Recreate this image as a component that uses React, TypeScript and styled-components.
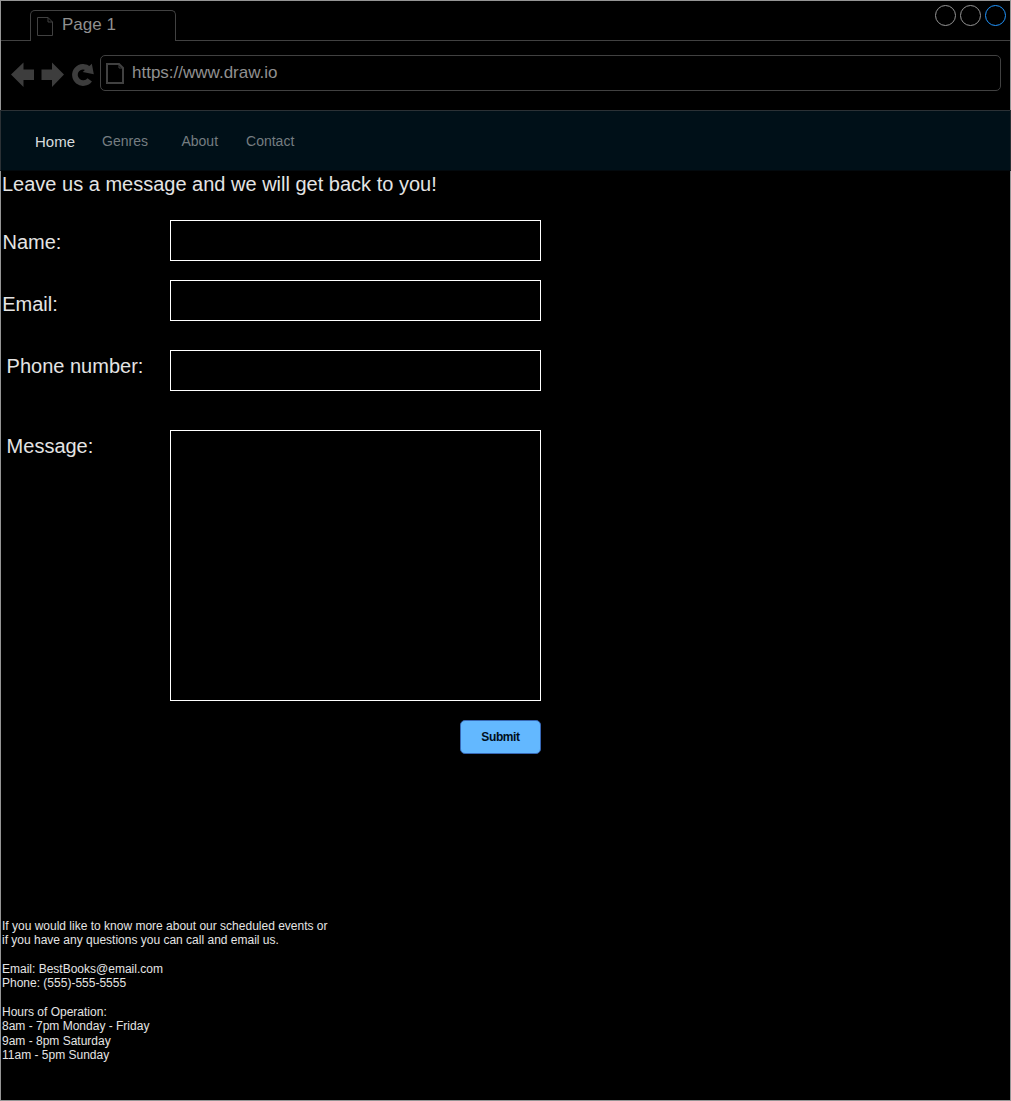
import React from 'react';
import styled, { createGlobalStyle } from 'styled-components';

const GlobalStyle = createGlobalStyle`
  * { box-sizing: border-box; }
  body { margin: 0; background: #000; font-family: "Liberation Sans", Arial, Helvetica, sans-serif; }
`;

const Frame = styled.div`
  width: 1011px;
  height: 1101px;
  border: 1px solid #959595;
  background: #000;
  display: flex;
  flex-direction: column;
`;

const TitleBar = styled.header`
  display: flex;
  height: 40px;
  flex: none;
`;

const TabGap = styled.div`
  width: 29px;
  border-bottom: 1px solid #414141;
`;

const Tab = styled.div`
  width: 146px;
  height: 31px;
  margin-top: 9px;
  border: 1px solid #414141;
  border-bottom: 0;
  border-radius: 5px 5px 0 0;
  display: flex;
  padding: 5px 0 0 6px;
  gap: 9px;

  svg {
    margin-top: 1px;
  }
`;

const TabTitle = styled.span`
  font-size: 17px;
  line-height: 19px;
  margin-top: -1px;
  color: #909090;
`;

const WindowControls = styled.div`
  flex: 1;
  display: flex;
  justify-content: flex-end;
  gap: 4px;
  padding: 4px 4px 0 0;
  border-bottom: 1px solid #414141;
`;

const Circle = styled.i<{ $color: string }>`
  width: 21px;
  height: 21px;
  border: 1px solid ${(p) => p.$color};
  border-radius: 50%;
`;

const Toolbar = styled.div`
  display: flex;
  flex: none;
  height: 69px;
  padding: 14px 9px 0 9px;
  gap: 5px;
`;

const Address = styled.div`
  flex: 1;
  height: 36px;
  border: 1px solid #414141;
  border-radius: 5px;
  display: flex;
  padding: 7px 0 0 5px;
  gap: 8px;
`;

const Url = styled.span`
  font-size: 17px;
  line-height: 19px;
  color: #909090;
`;

const Nav = styled.nav`
  display: flex;
  flex: none;
  align-items: flex-start;
  height: 61px;
  margin: 0 -1px;
  padding: 22px 0 0 34px;
  background: #001018;
  border: 1px solid #2b3135;
  border-bottom-color: #03090d;
`;

const NavItem = styled.a<{ $active?: boolean; $gap: number }>`
  font-size: ${(p) => (p.$active ? 15 : 14)}px;
  line-height: ${(p) => (p.$active ? 18 : 16)}px;
  color: ${(p) => (p.$active ? '#d8dcde' : '#757d81')};
  margin-right: ${(p) => p.$gap}px;
`;

const Content = styled.main`
  display: flex;
  flex-direction: column;
  flex: 1;
  color: #e4e4e4;
  padding-left: 1px;
`;

const Heading = styled.h1`
  margin: 1px 0 0;
  font-size: 20px;
  line-height: 24px;
  font-weight: 400;
`;

const Form = styled.form`
  display: flex;
  flex-direction: column;
  width: 539px;
  margin-top: 24px;
`;

const Field = styled.div<{ $after: number }>`
  display: flex;
  justify-content: space-between;
  margin-bottom: ${(p) => p.$after}px;
`;

const Label = styled.label<{ $top: number; $indent: number }>`
  font-size: 20px;
  line-height: 24px;
  padding: ${(p) => p.$top}px 0 0 ${(p) => p.$indent}px;
`;

const Input = styled.div<{ $height: number }>`
  width: 371px;
  height: ${(p) => p.$height}px;
  border: 1px solid #fff;
`;

const Submit = styled.button`
  align-self: flex-end;
  width: 81px;
  height: 34px;
  padding: 0;
  border: 1px solid #3767b4;
  border-radius: 5px;
  background: #63b8ff;
  color: #000f1d;
  font: bold 12px/14px "Liberation Sans", Arial, sans-serif;
  letter-spacing: -0.4px;
`;

const Info = styled.footer`
  margin-top: 164.5px;
  font-size: 12px;
  line-height: 14.4px;
  white-space: pre-line;
`;

const PageIcon = ({ w, h, stroke }: { w: number; h: number; stroke: number }) => {
  const s = stroke / 2;
  return (
    <svg width={w} height={h} fill="none" stroke="#414141" strokeWidth={stroke}>
      <path d={`M${s} ${s}H${w - 5}L${w - s} 5V${h - s}H${s}Z`} />
      <path d={`M${w - 5} ${s}V5H${w - s}`} strokeWidth="1" />
    </svg>
  );
};

const NavIcons = () => (
  <svg width="85" height="36" viewBox="10 55 85 36" fill="#3d3d3d">
    <path d="M11 74.5 23.5 62.5V69.5H34V80H23.5V87Z" />
    <path d="M64 74.5 52 62.5V69.5H41.5V80H52V87Z" />
    <path d="M89.7 79.8A8.2 8.2 0 1 1 88.8 69" fill="none" stroke="#3d3d3d" strokeWidth="5.6" />
    <path d="M91.8 63.7 93.8 74.3 82.7 72Z" />
  </svg>
);

const links = [
  { text: 'Home', active: true, gap: 27 },
  { text: 'Genres', gap: 33.5 },
  { text: 'About', gap: 28 },
  { text: 'Contact', gap: 0 },
];

const fields = [
  { label: 'Name:', top: 10, indent: 0.5, height: 41, after: 19 },
  { label: 'Email:', top: 12, indent: 0.2, height: 41, after: 29 },
  { label: 'Phone number:', top: 4, indent: 4.6, height: 41, after: 39 },
  { label: 'Message:', top: 4, indent: 4.6, height: 271, after: 19 },
];

const info = `If you would like to know more about our scheduled events or
if you have any questions you can call and email us.

Email: BestBooks@email.com
Phone: (555)-555-5555

Hours of Operation:
8am - 7pm Monday - Friday
9am - 8pm Saturday
11am - 5pm Sunday`;

export default function App() {
  return (
    <Frame>
      <GlobalStyle />
      <TitleBar>
        <TabGap />
        <Tab>
          <PageIcon w={16} h={19} stroke={1} />
          <TabTitle>Page 1</TabTitle>
        </Tab>
        <WindowControls>
          <Circle $color="#959595" />
          <Circle $color="#959595" />
          <Circle $color="#2196ff" />
        </WindowControls>
      </TitleBar>
      <Toolbar>
        <NavIcons />
        <Address>
          <PageIcon w={18} h={21} stroke={2} />
          <Url>https://www.draw.io</Url>
        </Address>
      </Toolbar>
      <Nav>
        {links.map((l) => (
          <NavItem key={l.text} $active={l.active} $gap={l.gap}>{l.text}</NavItem>
        ))}
      </Nav>
      <Content>
        <Heading>Leave us a message and we will get back to you!</Heading>
        <Form>
          {fields.map((f) => (
            <Field key={f.label} $after={f.after}>
              <Label $top={f.top} $indent={f.indent}>{f.label}</Label>
              <Input $height={f.height} />
            </Field>
          ))}
          <Submit type="button">Submit</Submit>
        </Form>
        <Info>{info}</Info>
      </Content>
    </Frame>
  );
}
